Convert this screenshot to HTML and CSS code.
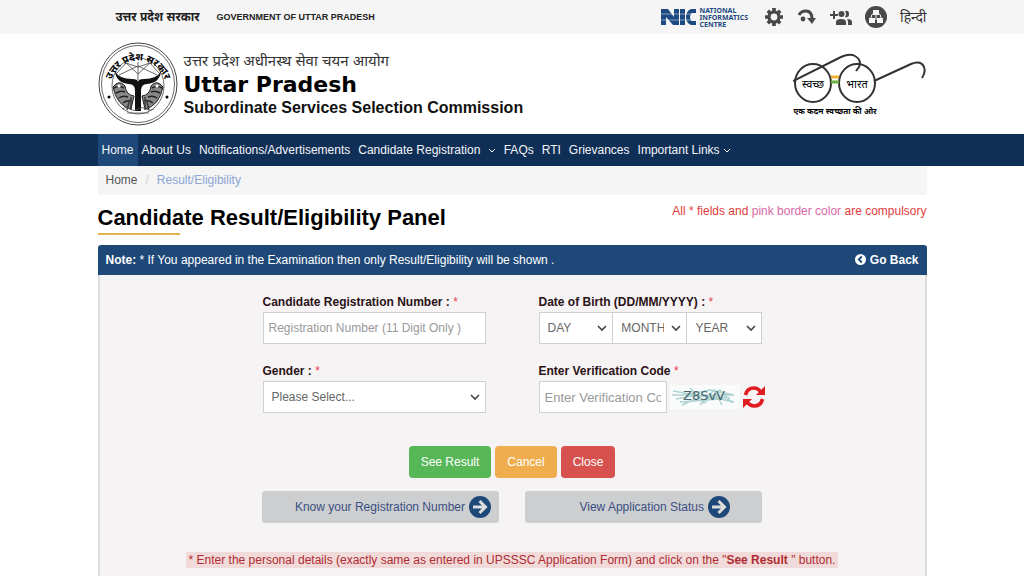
FILE: index.html
```html
<!DOCTYPE html>
<html lang="en">

<head>
    <meta charset="utf-8">
    <title>Candidate Result/Eligibility Panel</title>
    <meta name="viewport" content="width=device-width, initial-scale=1.0">
    <link rel="stylesheet" href="styles.css">
</head>

<body>
    <div class="topbar">
        <div class="container topbar-inner">
            <div class="gov">
                <span class="gov-hi" lang="hi">उत्तर प्रदेश सरकार</span>
                <span class="gov-en">GOVERNMENT OF UTTAR PRADESH</span>
            </div>
            <div class="tools">
                <a href="#" class="nic">
                    <svg width="35" height="18" viewBox="0 0 35 18" aria-hidden="true">
                        <path fill="#1d4a82" d="M0 1h7l6 8V1h5v16h-6L5 9v8H0zM19 1h5v16h-5zM35 1v4h-4q-2 1-2 4t2 4h4v4h-5q-5-2-5-8t5-8z"/>
                        <path stroke="#f5f5f5" d="M0 6h35M0 12h35" stroke-width=".5"/>
                    </svg>
                    <span>NATIONAL<br>INFORMATICS<br>CENTRE</span>
                </a>
                <a href="#" aria-label="Settings">
                    <svg width="20" height="20" viewBox="0 0 20 20">
                        <g stroke="#484848" stroke-width="3.6"><path d="M10 1v18M1 10h18M3.800 3.800l12.400 12.400M16.200 3.800L3.800 16.200"/></g>
                        <circle cx="10" cy="10" r="6.600" fill="#484848"/><circle cx="10" cy="10" r="3.400" fill="#f5f5f5"/>
                    </svg>
                </a>
                <a href="#" aria-label="Skip to content">
                    <svg width="20" height="20" viewBox="0 0 20 20">
                        <path d="M2 8Q4 4 9 4q6 0 6 8" fill="none" stroke="#484848" stroke-width="3"/>
                        <path d="M10 11h9l-4 6z" fill="#484848"/><circle cx="6" cy="12" r="2.400" fill="#484848"/>
                    </svg>
                </a>
                <a href="#" aria-label="Social media">
                    <svg width="22" height="20" viewBox="0 0 22 20">
                        <g fill="#484848"><path d="M0 7h3V4h2v3h3v2H5v3H3V9H0zM6 18v-3q0-3 5-3t5 3v3zM15 4q4-1 4 3t-4 3q2-3 0-6zM17 12q5 0 5 3v3h-4v-3q0-2-1-3z"/><circle cx="11.500" cy="7" r="3"/></g>
                    </svg>
                </a>
                <a href="#" aria-label="Sitemap">
                    <svg width="22" height="22" viewBox="0 0 22 22">
                        <circle cx="11" cy="11" r="11" fill="#484848"/>
                        <path fill="#f5f5f5" d="M8 4h6v5H8zM4 12h6v5H4zM12 12h6v5h-6z"/>
                        <path d="M6 12q0-4 3-5M16 12q0-4-3-5M11 8v6" fill="none" stroke="#f5f5f5"/>
                    </svg>
                </a>
                <a href="#" class="lang" lang="hi">हिन्दी</a>
            </div>
        </div>
    </div>

    <header class="container header">
        <div class="brand">
            <!-- state emblem -->
            <svg class="emblem" width="80" height="84" viewBox="0 0 80 84" aria-hidden="true">
                <defs><path id="arc" d="M12 54A28.500 30 0 1 1 68 54"/></defs>
                <g fill="none" stroke="#444">
                    <ellipse cx="40" cy="42" rx="39" ry="41"/>
                    <ellipse cx="40" cy="42" rx="36.500" ry="38.500" stroke-width=".8"/>
                    <ellipse cx="40" cy="44" rx="26" ry="28" stroke-width=".8"/>
                    <path d="M19 31l9-10 12 4 12-4 9 10M21 33l19-9 19 9M40 20v18M28 21l12 11 12-11" stroke-width=".8"/>
                </g>
                <text class="emblem-text" lang="hi"><textPath href="#arc" startOffset="50%">उत्तर प्रदेश सरकार</textPath></text>
                <path d="M17 29q4 8 17 8 6 0 6 3 0-3 6-3 13 0 17-8-1 12-14 13-6 0-6 7v20h-6V49q0-7-6-7-13-1-14-13z" fill="#111"/>
                <!-- fish on both sides -->
                <path d="M15 45q6-8 12-1 1 9 9 10l-3 13q-14-3-18-22zM65 45q-6-8-12-1-1 9-9 10l3 13q14-3 18-22z" fill="#888" stroke="#222"/>
                <path d="M16 46q5-3 10 0M18 51q5-3 9-1M21 56q4-3 9-1M25 61q4-3 8-2M64 46q-5-3-10 0M62 51q-5-3-9-1M59 56q-4-3-9-1M55 61q-4-3-8-2" fill="none" stroke="#222" stroke-width="1.500"/>
                <circle cx="21" cy="44" r="1.500" fill="#fff"/><circle cx="59" cy="44" r="1.500" fill="#fff"/>
                <path d="M33 55v13M47 55v13M31 60l-2 8M49 60l2 8" stroke="#333" stroke-width="1.400"/>
                <path d="M24 67q4-3 8 0t8 0 8 0 8 0M29 71h22" fill="none" stroke="#555" stroke-width=".8"/>
                <circle cx="11" cy="55" r="1.500"/><circle cx="69" cy="55" r="1.500"/>
            </svg>
            <div class="brand-text">
                <p class="brand-hi" lang="hi">उत्तर प्रदेश अधीनस्थ सेवा चयन आयोग</p>
                <p class="brand-name">Uttar Pradesh</p>
                <p class="brand-sub">Subordinate Services Selection Commission</p>
            </div>
        </div>
        <svg class="glasses" width="134" height="64" viewBox="0 0 134 64" lang="hi">
            <g fill="none" stroke="#333" stroke-width="2">
                <ellipse cx="20" cy="31" rx="18" ry="19"/><ellipse cx="64" cy="31" rx="18" ry="19"/>
                <path d="M0 29L48 5q9-4 14-1 7 4 4 11l-3 4M81 29l37-17q10-4 13 3 2 5-2 11"/>
            </g>
            <path d="M38 25h8" stroke="#f0b030" stroke-width="3"/><path d="M38 30h8" stroke="#6aae3c" stroke-width="3"/>
            <text x="20" y="36" class="lens">स्वच्छ</text>
            <text x="64" y="36" class="lens">भारत</text>
            <text x="42" y="62" class="motto">एक कदम स्वच्छता की ओर</text>
        </svg>
    </header>

    <nav class="nav">
        <div class="container nav-inner">
            <a href="#" class="active">Home</a>
            <a href="#">About Us</a>
            <a href="#">Notifications/Advertisements</a>
            <a href="#" class="drop wide">Candidate Registration
                <svg width="8" height="6" viewBox="0 0 8 6"><path d="M1 1l3 3 3-3"/></svg></a>
            <a href="#">FAQs</a>
            <a href="#">RTI</a>
            <a href="#">Grievances</a>
            <a href="#" class="drop">Important Links
                <svg width="8" height="6" viewBox="0 0 8 6"><path d="M1 1l3 3 3-3"/></svg></a>
        </div>
    </nav>

    <main class="container main">
        <div class="breadcrumb"><a href="#">Home</a><span class="sep">/</span><span class="current">Result/Eligibility</span></div>

        <div class="heading">
            <h1>Candidate Result/Eligibility Panel</h1>
            <p>All * fields and <span>pink border color</span> are compulsory</p>
        </div>

        <div class="note-bar">
            <p><b>Note:</b> * If You appeared in the Examination then only Result/Eligibility will be shown .</p>
            <a href="#">
                <svg width="11" height="11" viewBox="0 0 11 11"><circle cx="5.500" cy="5.500" r="5.500" fill="#fff"/><path d="M6.800 2.500l-3 3 3 3" fill="none" stroke="#1e4878" stroke-width="1.800"/></svg>
                Go Back
            </a>
        </div>

        <form class="panel">
            <div class="fields">
                <div class="field">
                    <label for="regNo">Candidate Registration Number : <i>*</i></label>
                    <input type="text" id="regNo" placeholder="Registration Number (11 Digit Only )">
                </div>
                <div class="field">
                    <label for="day">Date of Birth (DD/MM/YYYY) : <i>*</i></label>
                    <div class="dob">
                        <select id="day"><option>DAY</option></select>
                        <select id="month" aria-label="Month"><option>MONTH</option></select>
                        <select id="year" aria-label="Year"><option>YEAR</option></select>
                    </div>
                </div>
                <div class="field">
                    <label for="gender">Gender : <i>*</i></label>
                    <select id="gender"><option>Please Select...</option><option>Male</option><option>Female</option></select>
                </div>
                <div class="field">
                    <label for="code">Enter Verification Code <i>*</i></label>
                    <div class="captcha">
                        <input type="text" id="code" placeholder="Enter Verification Code">
                        <svg class="captcha-img" width="70" height="24" viewBox="0 0 70 24">
                            <rect width="70" height="24" fill="#fafbfb"/>
                            <g fill="none" stroke="#8fc0c2" stroke-width="1.500" opacity=".7">
                                <path d="M3 6l17 3 20-4 24 5M6 14l22-4 34 6M12 20l20-9 28 2M20 3l14 15 16-13 12 13M2 10h62M10 17l40-3 14 3M30 20l14-15 8 15"/>
                            </g>
                            <text x="34" y="15">Z8SvV</text>
                        </svg>
                        <button type="button" class="refresh" aria-label="Refresh code">
                            <svg width="22" height="24" viewBox="0 0 22 24">
                                <path d="M2.500 10Q4 3 11 3q4 0 7 4M19.500 14Q18 21 11 21q-4 0-7-4" fill="none" stroke="#e01b22" stroke-width="3.600"/>
                                <path d="M22 1v9h-9zM0 23v-9h9z" fill="#e01b22"/>
                            </svg>
                        </button>
                    </div>
                </div>
            </div>

            <div class="actions">
                <button type="submit" class="btn green">See Result</button>
                <button type="reset" class="btn orange">Cancel</button>
                <button type="button" class="btn red">Close</button>
            </div>

            <div class="links">
                <a href="#">Know your Registration Number
                    <svg width="22" height="22" viewBox="0 0 22 22"><circle cx="11" cy="11" r="11" fill="#1e4878"/><path d="M4 11h12M10.500 5l6 6-6 6" fill="none" stroke="#dcdcdc" stroke-width="3"/></svg></a>
                <a href="#">View Application Status
                    <svg width="22" height="22" viewBox="0 0 22 22"><circle cx="11" cy="11" r="11" fill="#1e4878"/><path d="M4 11h12M10.500 5l6 6-6 6" fill="none" stroke="#dcdcdc" stroke-width="3"/></svg></a>
            </div>

            <p class="hint"><span>* Enter the personal details (exactly same as entered in UPSSSC Application Form) and click on the "<b>See Result </b>" button.</span></p>
        </form>
    </main>
</body>

</html>
```

FILE: styles.css
```css
* {
    margin: 0;
    padding: 0;
    box-sizing: border-box;
}

body {
    display: flex;
    flex-direction: column;
    min-height: 100vh;
    font-family: "Liberation Sans", "Noto Sans", sans-serif;
    font-size: 12px;
    line-height: 16px;
    color: #333;
    background: #fff;
}

a {
    color: inherit;
    text-decoration: none;
}

.container {
    width: 100%;
    max-width: 829px;
    margin: 0 auto;
}

/* top bar */
.topbar {
    background: #f5f5f5;
}

.topbar-inner,
.gov,
.tools,
.nic {
    display: flex;
    align-items: center;
}

.topbar-inner {
    justify-content: space-between;
    height: 34px;
    padding-left: 18px;
}

.gov {
    gap: 17px;
    color: #222;
    font-weight: bold;
}

.gov-hi {
    font-size: 12px;
}

.gov-en {
    font-size: 9px;
}

.tools {
    gap: 13px;
}

.tools svg {
    display: block;
}

.nic {
    gap: 4px;
    margin-right: 3px;
    font-family: "Noto Sans", sans-serif;
    font-size: 7px;
    font-weight: bold;
    line-height: 7px;
    color: #1d4a82;
}

.lang {
    font-size: 14px;
}

/* header */
.header {
    display: flex;
    justify-content: space-between;
    align-items: center;
    height: 100px;
}

.brand {
    display: flex;
    align-items: center;
    gap: 6px;
}

.emblem-text {
    font-size: 10px;
    font-weight: bold;
    text-anchor: middle;
}

.brand-hi {
    font-size: 15px;
    line-height: 22px;
}

.brand-name {
    font-family: "DejaVu Sans", sans-serif;
    font-size: 22px;
    font-weight: bold;
    line-height: 26px;
    color: #000;
}

.brand-sub {
    font-size: 16px;
    font-weight: bold;
    line-height: 20px;
    color: #111;
}

.lens {
    font-size: 11px;
    text-anchor: middle;
}

.motto {
    font-size: 8px;
    font-weight: bold;
    text-anchor: middle;
}

/* menu */
.nav {
    background: #102f56;
    color: #f2f5f9;
}

.nav-inner {
    display: flex;
}

.nav a {
    padding: 0 4px;
    line-height: 32px;
}

.nav .active {
    background: #1e4878;
}

.nav svg {
    fill: none;
    stroke: #fff;
    vertical-align: middle;
}

.nav .wide svg {
    margin-left: 4px;
}

/* content */
.main {
    display: flex;
    flex: 1;
    flex-direction: column;
}

.breadcrumb {
    display: flex;
    gap: 8px;
    padding: 0 8px;
    background: #f5f5f6;
    color: #555;
    line-height: 29px;
}

.sep {
    color: #ccc;
}

.current {
    color: #8ba6d4;
}

.heading {
    display: flex;
    justify-content: space-between;
    padding: 8px 0 10px;
}

h1 {
    font-size: 22px;
    line-height: 30px;
    color: #000;
}

h1::after {
    display: block;
    width: 82px;
    height: 2px;
    background: #e3b34c;
    content: "";
}

.heading p {
    color: #e03c3c;
}

.heading p span {
    color: #d768a8;
}

.note-bar {
    display: flex;
    justify-content: space-between;
    padding: 0 8px;
    border-radius: 3px 3px 0 0;
    background: #1e4878;
    color: #fff;
    line-height: 30px;
}

.note-bar a {
    font-weight: bold;
}

.note-bar svg {
    vertical-align: -1px;
}

.panel {
    flex: 1;
    padding: 18px 20px 7px;
    border: solid #dcdcdc;
    border-width: 0 2px;
    background: #f5f3f4;
}

.fields {
    display: grid;
    grid-template-columns: 223px 223px;
    gap: 18px 53px;
    justify-content: center;
}

.field label {
    display: block;
    height: 19px;
    line-height: 18px;
    font-weight: bold;
    color: #2b1216;
}

.field i {
    font-style: normal;
    font-weight: normal;
    color: #e84050;
}

input,
select {
    width: 100%;
    height: 32px;
    padding: 0 5px;
    border: 1px solid #d0d0d0;
    border-radius: 0;
    background: #fff;
    font: inherit;
    color: #666;
}

input::placeholder {
    color: #999;
}

select {
    padding: 0 22px 0 8px;
    appearance: none;
    background: #fff url("data:image/svg+xml,%3Csvg xmlns='http://www.w3.org/2000/svg' width='10' height='7'%3E%3Cpath d='M1 1l4 4 4-4' fill='none' stroke='%23444' stroke-width='1.6'/%3E%3C/svg%3E") no-repeat right 5px center;
}

.dob {
    display: flex;
}

.dob select + select {
    border-left: 0;
}

.captcha {
    display: flex;
    align-items: center;
    gap: 3px;
    margin-right: -3px;
}

.captcha input {
    flex: 1;
    min-width: 0;
    font-size: 13px;
}

.captcha-img text {
    font-family: "DejaVu Sans", sans-serif;
    font-size: 13px;
    fill: #46666c;
    text-anchor: middle;
}

.refresh {
    border: 0;
    background: none;
    cursor: pointer;
}

.refresh svg {
    display: block;
}

.actions,
.links {
    display: flex;
    justify-content: center;
}

.actions {
    gap: 4px;
    margin: 33px 0 13px;
}

.btn {
    height: 32px;
    padding: 0 12px;
    border: 0;
    border-radius: 4px;
    color: #fff;
    font: inherit;
    cursor: pointer;
}

.green {
    background: #57b757;
}

.orange {
    background: #efad4d;
}

.red {
    background: #d7524e;
}

.links {
    gap: 26px;
}

.links a {
    display: flex;
    align-items: center;
    justify-content: flex-end;
    gap: 4px;
    width: 237px;
    height: 32px;
    padding-right: 8px;
    border-radius: 3px;
    background: #cdcecf;
    color: #3b5084;
}

.links a:last-child {
    padding-right: 32px;
}

.hint {
    margin-top: 29px;
    text-align: center;
    color: #b02a30;
}

.hint span {
    padding: 1px 3px;
    background: #f0dada;
}
```
